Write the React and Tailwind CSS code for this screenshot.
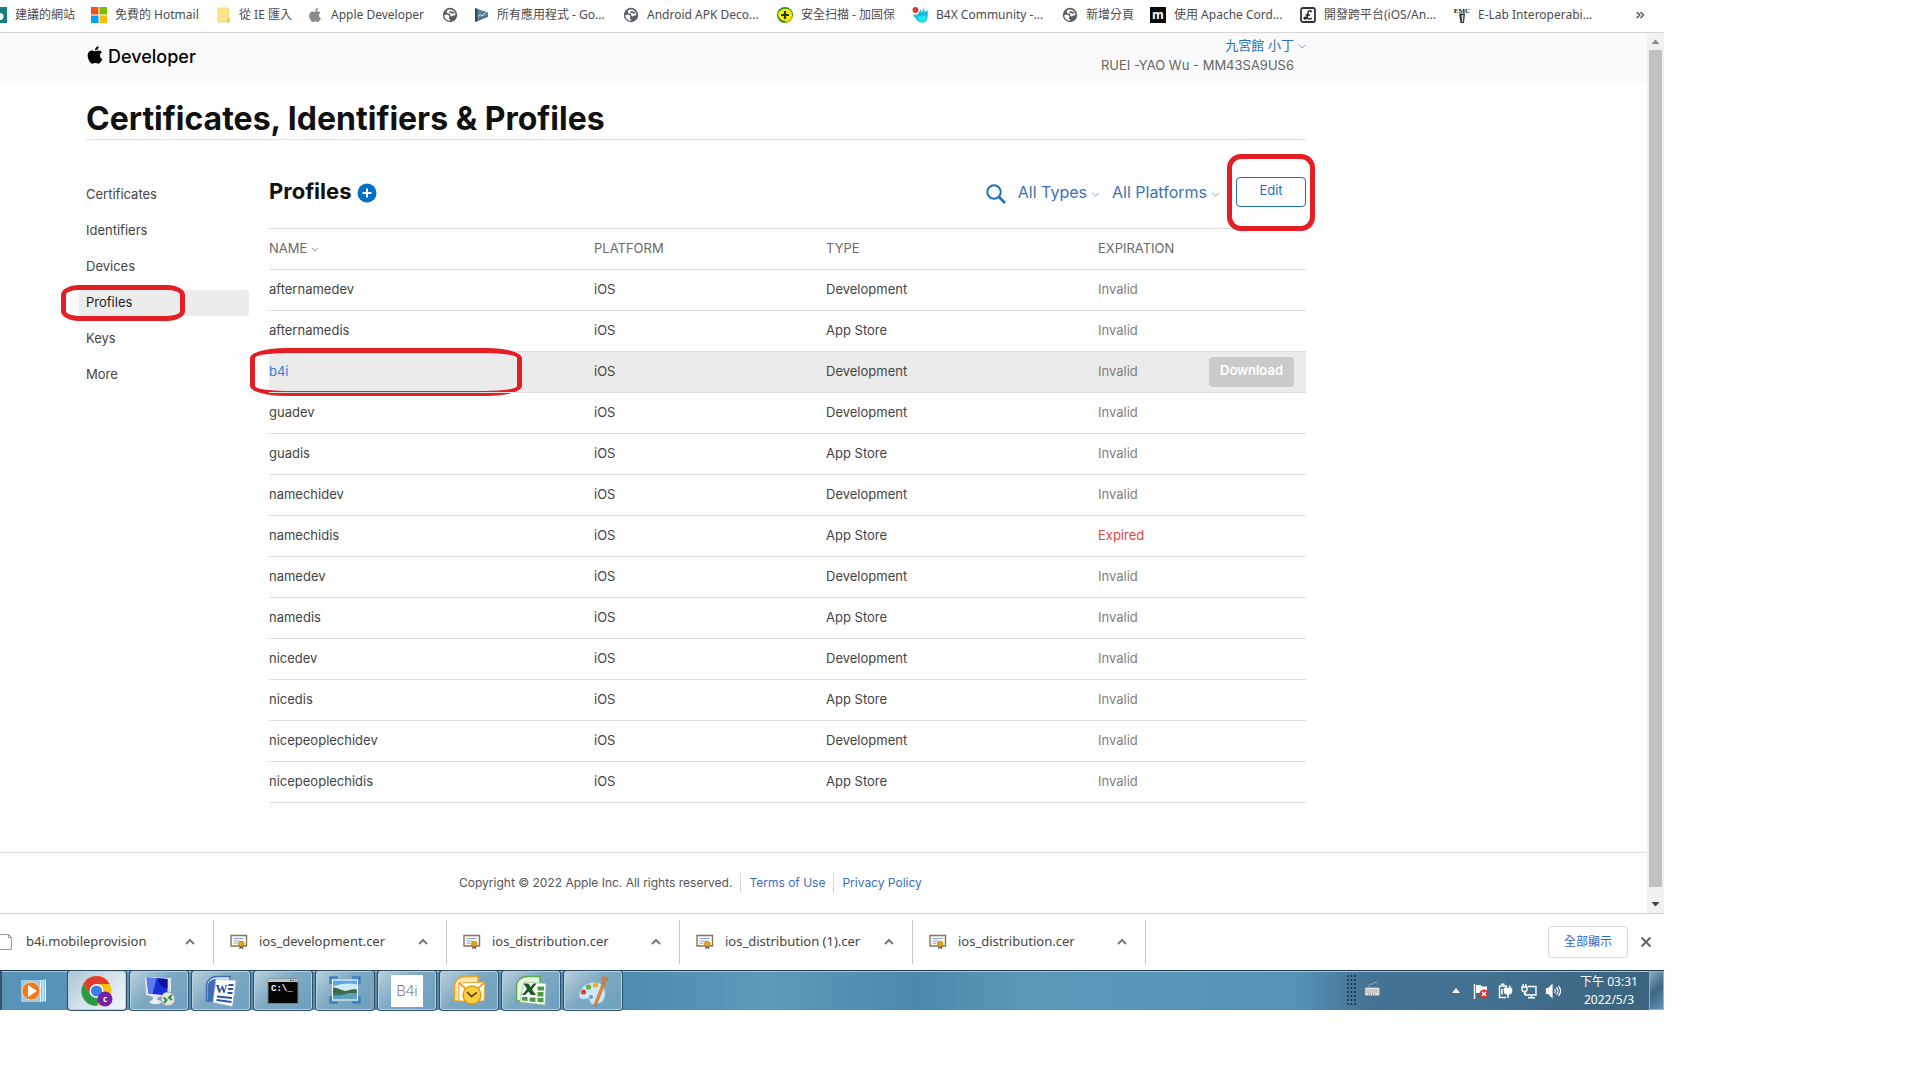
import React from "react";
import { FaApple } from "react-icons/fa";

const BOOKMARK_FONT = "font-['Noto_Sans','Noto_Sans_CJK_TC',sans-serif]";

function Chevron({ className = "", up = false }) {
  return (
    <svg viewBox="0 0 10 6" className={className} fill="none" stroke="currentColor" aria-hidden="true">
      <path d={up ? "M1 5 5 1l4 4" : "M1 1l4 4 4-4"} />
    </svg>
  );
}

function Globe() {
  return (
    <svg viewBox="0 0 16 16" className="size-4" aria-hidden="true">
      <circle cx="8" cy="8" r="7.2" fill="#5a5e63" />
      <path d="M2.300 8.300C4 7.400 6.500 7.800 7.300 9c.6 1.200-.8 1.600-.4 2.600.3.800 1.600.6 1.300 2.200C4.800 13.900 2.300 11.500 2.300 8.300Z" fill="#fff" />
      <path d="M4.800 3.800C7 1.900 11.500 1.700 13.600 7.200c-.8 2-2.600.8-3.200 1.700-.5 1-2.200.3-2.200-.8 0-1-.7-1.500-1.900-1.500-1.300-.1-1.900-1.800-1.500-2.800Z" fill="#fff" />
      <path d="M7.500 4.500c1.800-.6 2.600.4 4 .6l1 1.600c-1.600.4-2.400-.6-3.800-.4-.9 0-1.800-1-1.200-1.800Z" fill="#5a5e63" />
    </svg>
  );
}

function MicrosoftIcon() {
  return (
    <svg viewBox="0 0 16 16" className="size-4" aria-hidden="true">
      <path fill="#f1511b" d="M0 0h7.500v7.500H0z" />
      <path fill="#80bb03" d="M8.500 0H16v7.500H8.500z" />
      <path fill="#00a3f0" d="M0 8.500h7.500V16H0z" />
      <path fill="#fbb909" d="M8.500 8.500H16V16H8.500z" />
    </svg>
  );
}

function FolderIcon() {
  return (
    <svg viewBox="0 0 16 16" className="size-4" aria-hidden="true">
      <path d="M3 1h10.500v10l.5 4H3z" fill="#fde58b" stroke="#edcf68" strokeWidth=".8" />
      <path d="M12.500 11.500h1.800V15h-2z" fill="#f7d566" stroke="#dcb94a" strokeWidth=".6" />
    </svg>
  );
}

function PlayConsoleIcon() {
  return (
    <svg viewBox="0 0 16 16" className="size-4" aria-hidden="true">
      <path d="M2 1l13 4.500v4L2 15z" fill="#5d8499" />
      <path d="M2 1l2.500 1v12L2 15z" fill="#2f4f60" />
      <path d="M2 15l13-5.500V8L4 13z" fill="#3c6174" />
      <path d="M5 9.500l2.500-2L9 9l3.500-3" stroke="#d5eaf4" fill="none" />
    </svg>
  );
}

function ShieldScanIcon() {
  return (
    <svg viewBox="0 0 16 16" className="size-4" aria-hidden="true">
      <circle cx="8" cy="8" r="8" fill="#2f8f2b" />
      <path d="M1 6.500C3 2 9 .5 13 3c3 3 2.500 8-1 10.500C7 15 1.500 13 1 6.500z" fill="#ffe90f" />
      <path d="M8 16c4 0 8-3.500 8-8-1 3-4 6-8 6.500z" fill="#f3b51c" />
      <path d="M8 4v8M4 8h8" stroke="#17421b" strokeWidth="2.200" />
    </svg>
  );
}

function B4XIcon() {
  return (
    <svg viewBox="0 0 16 16" className="size-4" aria-hidden="true">
      <circle cx="3.500" cy="3" r="3" fill="#dd3b3b" />
      <path d="M1 7c1.500 1 3 1 4.500.5L9 2l.5 4L12 .5l.5 4.500L15.500 3c.5 5 .5 9-2 12-4 1.500-8.500 0-9.500-3.500C2 10 1.500 9 1 7z" fill="#19bcd6" />
      <path d="M5 10c3-1.500 6-1.500 9.500-1.500-.5 3-.5 4.500-1.500 6-3.500 1-7-.5-8-4.500z" fill="#1ee5f5" />
    </svg>
  );
}

function MediumIcon() {
  return (
    <svg viewBox="0 0 16 16" className="size-4" aria-hidden="true">
      <path d="M0 0h16v16H0z" fill="#0a0a0a" />
      <text x="8" y="11.500" textAnchor="middle" fontSize="12" fontWeight="700" fill="#fff" fontFamily="Open Sans, sans-serif">m</text>
    </svg>
  );
}

function PoundIcon() {
  return (
    <svg viewBox="0 0 16 16" className="size-4" aria-hidden="true">
      <rect x="1" y="1" width="14" height="14" rx="2" fill="#fff" stroke="#333" strokeWidth="1.800" />
      <path d="M11.500 5.200C11 3.200 8.300 3.400 8 5.500c-.3 2 .2 4-1.600 5.800-1.500 1.400-3 .2-2-.8 1.500-1 3.600 1.800 5.600 1.600 1 0 1.500-.6 1.800-1.300M5.500 8h4.500" fill="none" stroke="#222" strokeWidth="1.500" />
    </svg>
  );
}

function EmcIcon() {
  return (
    <svg viewBox="0 0 16 16" className="size-4" aria-hidden="true">
      <text x="8" y="6" textAnchor="middle" fontSize="7" fontWeight="700" fill="#111" fontFamily="Liberation Serif, serif">EMC</text>
      <path d="M5 6.500h6L10 16H6.500z" fill="#333" />
      <path d="M7.500 8h2l-.5 7H8z" fill="#ddd" />
    </svg>
  );
}

const bookmarks = [
  { label: "免費的 Hotmail", Icon: MicrosoftIcon, width: "w-[124px]" },
  { label: "從 IE 匯入", Icon: FolderIcon, width: "w-[92px]" },
  { label: "Apple Developer", Icon: () => <FaApple className="size-4 text-[#8a8a8a]" />, width: "w-[135px]" },
  { label: "", Icon: Globe, width: "w-[31px]" },
  { label: "所有應用程式 - Go...", Icon: PlayConsoleIcon, width: "w-[150px]" },
  { label: "Android APK Deco...", Icon: Globe, width: "w-[154px]" },
  { label: "安全扫描 - 加固保", Icon: ShieldScanIcon, width: "w-[135px]" },
  { label: "B4X Community -...", Icon: B4XIcon, width: "w-[150px]" },
  { label: "新增分頁", Icon: Globe, width: "w-[88px]" },
  { label: "使用 Apache Cord...", Icon: MediumIcon, width: "w-[150px]" },
  { label: "開發跨平台(iOS/An...", Icon: PoundIcon, width: "w-[154px]" },
  { label: "E-Lab Interoperabi...", Icon: EmcIcon, width: "w-[150px]" },
];

function BookmarksBar() {
  return (
    <nav aria-label="Bookmarks" className={`flex h-[33px] items-center border-b border-[#d6d6d6] pb-[3px] text-xs text-[#4b4b50] ${BOOKMARK_FONT}`}>
      <a href="#suggested" className="flex w-[91px] shrink-0 items-center gap-2 whitespace-nowrap">
        <svg viewBox="0 0 7 16" className="h-4 w-[7px]" aria-hidden="true">
          <path d="M0 0h7v16H0z" fill="#12807c" />
          <circle cx="0" cy="9.500" r="3.500" fill="#fff" />
        </svg>
        建議的網站
      </a>
      {bookmarks.map(({ label, Icon, width }, i) => (
        <a key={i} href={`#bookmark-${i}`} aria-label={label || "Bookmark"} className={`flex shrink-0 items-center gap-2 whitespace-nowrap ${width}`}>
          <Icon />
          {label}
        </a>
      ))}
      <button type="button" aria-label="More bookmarks" className="ml-auto mr-5">
        <svg viewBox="0 0 8 8" className="size-2" fill="none" stroke="#555" strokeWidth="1.500" aria-hidden="true">
          <path d="M.8 1l3 3-3 3M4.500 1l3 3-3 3" />
        </svg>
      </button>
    </nav>
  );
}

const sections = ["Certificates", "Identifiers", "Devices", "Profiles", "Keys", "More"];

function Sidebar() {
  return (
    <nav aria-label="Sections" className="w-[183px] shrink-0 pt-[42px]">
      <ul className="flex flex-col gap-[10px]">
        {sections.map((name) => {
          const active = name === "Profiles";
          return (
            <li key={name} className={`relative -ml-[7px] mr-5 flex h-[26px] items-center rounded px-[7px] text-[13px] ${active ? "bg-[#ececec] text-[#222]" : "text-[#444]"}`}>
              <a href={`#${name.toLowerCase()}`}>{name}</a>
              {active && <span aria-hidden="true" className="absolute -left-[18px] -top-[5px] h-9 w-[124px] border-[5px] border-[#e31e25] [border-radius:18px/10px]" />}
            </li>
          );
        })}
      </ul>
    </nav>
  );
}

const profiles = [
  ["afternamedev", "Development"],
  ["afternamedis", "App Store"],
  ["b4i", "Development"],
  ["guadev", "Development"],
  ["guadis", "App Store"],
  ["namechidev", "Development"],
  ["namechidis", "App Store", "Expired"],
  ["namedev", "Development"],
  ["namedis", "App Store"],
  ["nicedev", "Development"],
  ["nicedis", "App Store"],
  ["nicepeoplechidev", "Development"],
  ["nicepeoplechidis", "App Store"],
];

function ProfilesTable() {
  return (
    <table className="w-full table-fixed border-separate border-spacing-0 border-b border-[#dedede] text-left text-[13px] text-[#444]">
      <colgroup>
        <col className="w-[325px]" />
        <col className="w-[232px]" />
        <col className="w-[272px]" />
        <col />
      </colgroup>
      <thead>
        <tr className="h-[41px] text-[#6a6a6a] [&>th]:border-t [&>th]:border-[#dedede] [&>th]:font-normal">
          <th>
            <button type="button" className="flex items-center gap-1">
              NAME <Chevron className="h-[5px] w-2 text-[#777]" />
            </button>
          </th>
          <th>PLATFORM</th>
          <th>TYPE</th>
          <th>EXPIRATION</th>
        </tr>
      </thead>
      <tbody>
        {profiles.map(([name, type, status = "Invalid"]) => {
          const hot = name === "b4i";
          return (
            <tr key={name} className={`h-[41px] [&>td]:border-t [&>td]:border-[#dedede] ${hot ? "bg-[#ebebeb]" : ""}`}>
              <td className="relative">
                <a href={`#${name}`} className={hot ? "text-[#2f7ce0]" : ""}>{name}</a>
                {hot && <span aria-hidden="true" className="absolute -left-[19px] -top-[4px] h-12 w-[272px] border-[5px] border-[#e31e25] [border-radius:36px/10px]" />}
              </td>
              <td>iOS</td>
              <td>{type}</td>
              <td className={status === "Expired" ? "text-[#e0483c]" : "text-[#808080]"}>
                <div className="flex items-center justify-between pr-3">
                  {status}
                  {hot && (
                    <button type="button" className="h-[30px] w-[85px] rounded bg-[#cacaca] pb-0.5 text-[13px] font-semibold text-white">
                      Download
                    </button>
                  )}
                </div>
              </td>
            </tr>
          );
        })}
      </tbody>
    </table>
  );
}

function Filter({ label }) {
  return (
    <div className="flex items-center gap-1">
      <select aria-label={label} className="field-sizing-content appearance-none bg-transparent text-base text-[#3a74b4]">
        <option>{label}</option>
      </select>
      <Chevron className="mt-1 h-[5px] w-[9px] text-[#5b90c6]" />
    </div>
  );
}

function DeveloperPage() {
  return (
    <div className="min-w-0 grow font-['Inter','Noto_Sans_CJK_TC',sans-serif]">
      <header className="h-[50px] bg-[#fafafa] pl-[86px] pr-[341px]">
        <div className="flex items-start justify-between">
          <a href="#developer" className="mt-3 flex items-center gap-1 text-lg leading-6 font-medium text-black">
            <FaApple className="mb-1 h-5 w-[18px]" />
            Developer
          </a>
          <div className="flex flex-col items-end text-[13px] leading-5 text-[#666]">
            <button type="button" className="mt-[2px] flex items-center gap-1 text-[#2a70b8]">
              九宮館 小丁
              <Chevron className="mt-0.5 h-[5px] w-2 text-[#5b90c6]" />
            </button>
            <span className="pr-3">RUEI -YAO Wu - MM43SA9US6</span>
          </div>
        </div>
      </header>

      <main className="pl-[86px] pr-[341px]">
        <h1 className="border-b border-[#dedede] pt-4 text-[32px] leading-10 font-bold text-[#111]">
          Certificates, Identifiers &amp; Profiles
        </h1>
        <div className="flex">
          <Sidebar />
          <section className="min-w-0 grow">
            <div className="flex h-[88px] items-center justify-between pt-4">
              <div className="-mt-0.5 flex items-center gap-[6px]">
                <h2 className="text-[22px] leading-7 font-bold text-[#111]">Profiles</h2>
                <button type="button" aria-label="Add profile" className="mt-1">
                  <svg viewBox="0 0 20 20" className="size-5" aria-hidden="true">
                    <circle cx="10" cy="10" r="9.500" fill="#0070c9" />
                    <path d="M10 5.500v9M5.500 10h9" stroke="#fff" strokeWidth="2" />
                  </svg>
                </button>
              </div>
              <div className="flex items-center gap-3">
                <button type="button" aria-label="Search" className="mt-1">
                  <svg viewBox="0 0 20 20" className="size-5" fill="none" stroke="#1d71bb" aria-hidden="true">
                    <circle cx="8" cy="8" r="6.700" strokeWidth="2" />
                    <path d="M13 13l6 6" strokeWidth="2.600" />
                  </svg>
                </button>
                <Filter label="All Types" />
                <Filter label="All Platforms" />
                <div className="relative ml-1">
                  <button type="button" className="h-[30px] w-[70px] rounded border border-[#1d71bb] pb-0.5 text-[13px] text-[#1d71bb]">
                    Edit
                  </button>
                  <span aria-hidden="true" className="pointer-events-none absolute -left-[9px] -top-[23px] h-[77px] w-[88px] rounded-[14px] border-[5px] border-[#e31e25]" />
                </div>
              </div>
            </div>
            <ProfilesTable />
          </section>
        </div>
      </main>

      <footer className="mt-[49px] flex h-[61px] items-center border-t border-[#dedede] pl-[459px] text-xs text-[#555]">
        <span>Copyright © 2022 Apple Inc. All rights reserved.</span>
        <a href="#terms" className="ml-2 border-l border-[#d6d6d6] px-2 leading-5 text-[#3a6fc0]">Terms of Use</a>
        <a href="#privacy" className="border-l border-[#d6d6d6] pl-2 leading-5 text-[#3a6fc0]">Privacy Policy</a>
      </footer>
    </div>
  );
}

function Scrollbar() {
  return (
    <div aria-hidden="true" className="flex w-[17px] shrink-0 flex-col items-center bg-[#f1f1f1]">
      <svg viewBox="0 0 17 17" className="size-[17px]"><path d="M4.500 11h8l-4-4.500z" fill="#8a8a8a" /></svg>
      <div className="w-[13px] grow bg-[#c1c1c1]" />
      <svg viewBox="0 0 17 26" className="h-[26px] w-[17px]"><path d="M4.500 15h8l-4 4.500z" fill="#444" /></svg>
    </div>
  );
}

function CertificateIcon() {
  return (
    <svg viewBox="0 0 18 16" className="h-4 w-[18px]" aria-hidden="true">
      <path d="M1 1.500h15.500v10.500H1z" fill="#fffdf6" stroke="#84745a" strokeWidth="1.400" />
      <path d="M3.500 4.500h10M3.500 7h6M3.500 9.200h4" stroke="#8b9fd0" />
      <path d="M9.700 11l-.4 4.500 2-1.500 2 1.500-.4-4.500z" fill="#3c5f9c" />
      <circle cx="11.300" cy="10" r="2.800" fill="#e6a417" stroke="#9c6b08" strokeWidth=".6" />
    </svg>
  );
}

const downloads = ["ios_development.cer", "ios_distribution.cer", "ios_distribution (1).cer", "ios_distribution.cer"];

function DownloadsBar() {
  return (
    <div className="flex h-[57px] items-center border-t border-[#d0d0d0] font-['Noto_Sans','Noto_Sans_CJK_TC',sans-serif] text-[13px] text-[#454545]">
      <div className="flex h-11 w-[214px] items-center border-r border-[#c8c8c8] pr-[18px]">
        <svg viewBox="0 0 12 16" className="mr-[14px] h-4 w-3" aria-hidden="true">
          <path d="M-2 .5H8.500l3 3v12H-2z" fill="#fdfdfd" stroke="#9a9a9a" />
          <path d="M8.500.5v3h3" fill="none" stroke="#9a9a9a" />
        </svg>
        <a href="#file">b4i.mobileprovision</a>
        <button type="button" aria-label="Options for b4i.mobileprovision" className="ml-auto">
          <Chevron up className="h-[6px] w-[10px] stroke-2 text-[#777]" />
        </button>
      </div>
      {downloads.map((file, i) => (
        <div key={i} className="flex h-11 w-[233px] items-center border-r border-[#c8c8c8] pr-[18px] pl-4">
          <CertificateIcon />
          <a href={`#download-${i}`} className="ml-[11px]">{file}</a>
          <button type="button" aria-label={`Options for ${file}`} className="ml-auto">
            <Chevron up className="h-[6px] w-[10px] stroke-2 text-[#777]" />
          </button>
        </div>
      ))}
      <button type="button" className="ml-auto h-8 w-20 rounded border border-[#d6d8db] text-xs text-[#2f66d0]">
        全部顯示
      </button>
      <button type="button" aria-label="Close downloads bar" className="mr-[12px] ml-3">
        <svg viewBox="0 0 12 12" className="size-3" stroke="#666" strokeWidth="2" aria-hidden="true">
          <path d="M1.500 1.500l9 9M10.500 1.500l-9 9" />
        </svg>
      </button>
    </div>
  );
}

function MediaPlayerIcon() {
  return (
    <svg viewBox="0 0 32 32" className="size-8" aria-hidden="true">
      <path d="M22 5l6-.5v22L22 27z" fill="#8cc8ea" />
      <path d="M22.500 5v22M25 5v21.500M27.500 4.500v22" stroke="#e3f4fd" />
      <path d="M3 5h19v22H3z" fill="#9ccbe6" />
      <circle cx="13" cy="16" r="9" fill="#f27a1c" stroke="#fbd3a5" />
      <path d="M10 10v12l9-6z" fill="#fff" />
    </svg>
  );
}

function ChromeIcon() {
  return (
    <svg viewBox="0 0 32 32" className="size-8" aria-hidden="true">
      <circle cx="15.500" cy="16" r="15" fill="#fbc116" />
      <path d="M15.500 1A15 15 0 0 0 2.500 8.500L9 19.500 15.500 9h13A15 15 0 0 0 15.500 1z" fill="#e33b2e" />
      <path d="M2.500 8.500A15 15 0 0 0 15.500 31l6.500-11.500L9 19.500z" fill="#269c4a" />
      <circle cx="15.500" cy="16" r="7" fill="#fff" />
      <circle cx="15.500" cy="16" r="5.600" fill="#3a7fe8" />
      <circle cx="24" cy="24" r="7.500" fill="#7421a3" />
      <text x="24" y="26.500" textAnchor="middle" fontSize="8" fontWeight="700" fill="#fff" fontFamily="Open Sans, sans-serif">c</text>
    </svg>
  );
}

function RemoteDesktopIcon() {
  return (
    <svg viewBox="0 0 32 32" className="size-8" aria-hidden="true">
      <path d="M2 2l26 1v18L15 22l-1 4H9l1-4-7-2z" fill="#dfe4ea" />
      <path d="M6 27c3-3 10-3 13 0-3 3-10 3-13 0z" fill="#e9ecef" />
      <path d="M3.500 2.500l21 1.500v16.500l-19-2z" fill="#1730d8" />
      <path d="M3.500 2.500l10 .8-4 15.700-4-.5z" fill="#6d8cf7" opacity=".8" />
      <path d="M14.500 3.300l10 .7v9c-4 1-8-3-10-9.700z" fill="#0b149c" />
      <circle cx="25" cy="24" r="7" fill="#e4e6e3" stroke="#999" />
      <path d="M20.500 22.500l3 2.500-2.500 3M29 20l-3 2.500 3 2.500" stroke="#2c9135" strokeWidth="2" fill="none" />
    </svg>
  );
}

function OfficePlate({ dark, light }) {
  return (
    <path d="M1.500 26V10C2.500 4.500 7 1.500 13 1.500h12V26z" fill={light} stroke={dark} strokeWidth="1.500" />
  );
}

function WordIcon() {
  return (
    <svg viewBox="0 0 32 32" className="size-8" aria-hidden="true">
      <OfficePlate dark="#3f6bb5" light="#dfe9f7" />
      <path d="M2.500 26V11C3.500 6 7 4 11 4L8 26z" fill="#3f6bb5" />
      <path d="M11 4l20 1.500-3.500 26L8 27.500z" fill="#fff" stroke="#9fb4d8" strokeWidth=".7" />
      <text x="10.500" y="18" fontSize="12" fontWeight="700" fill="#24478f" fontFamily="Liberation Serif, serif">W</text>
      <path d="M23.500 10h5M23 14h5M22.500 18h5M12 21.500l15 1.500M11.500 25l15 2" stroke="#2b55a5" strokeWidth="2" />
    </svg>
  );
}

function TerminalIcon() {
  return (
    <svg viewBox="0 0 32 32" className="size-8" aria-hidden="true">
      <path d="M1 4h30v24.500H1z" fill="#050505" stroke="#7d7d7d" />
      <path d="M1 4h30v3H1z" fill="#bfc4c8" />
      <path d="M23 5.500h2M26 5.500h1M28.500 5.500h1" stroke="#444" />
      <text x="4" y="16" fontSize="9" fontWeight="700" fill="#fff" fontFamily="Liberation Mono, monospace">C:\_</text>
    </svg>
  );
}

function PictureIcon() {
  return (
    <svg viewBox="0 0 32 32" className="size-8" aria-hidden="true">
      <path d="M1.500 9V2.500H9M23 2.500h7.500V9M1.500 21v6.500H9M23 27.500h7.500V21" fill="none" stroke="#3b7fc4" strokeWidth="2.400" />
      <path d="M3 4.500h26v21H3z" fill="#fff" />
      <path d="M4 5.500h24v9H4z" fill="#58a9e6" />
      <path d="M4 11.500c8-3 15-4 24-2v9H4z" fill="#cfe8f6" />
      <path d="M4 12.500c5 0 8 3 13 3.500 4-1.500 8-2 11-1.500V18H4z" fill="#3b6a4b" />
      <path d="M4 18h24v6.500H4z" fill="#5fa0bb" />
      <path d="M4 18h16l-8 2.500H4z" fill="#3f7378" />
    </svg>
  );
}

function B4iIcon() {
  return (
    <span className="flex h-8 w-8 items-center justify-center bg-white font-['Open_Sans',sans-serif] text-[15px] font-light text-[#666]">B4i</span>
  );
}

function OutlookIcon() {
  return (
    <svg viewBox="0 0 32 32" className="size-8" aria-hidden="true">
      <OfficePlate dark="#eea324" light="#fde7b4" />
      <path d="M6 8l26-1-1 19H6z" fill="#fffdf3" stroke="#e4a233" />
      <path d="M6 8l13 11L32 7" fill="none" stroke="#eda12c" strokeWidth="2" />
      <circle cx="19" cy="20" r="9" fill="#f9cf3c" stroke="#d9980d" strokeWidth="1.300" />
      <path d="M14 17l4.500 4.500 5.500-4" fill="none" stroke="#6d5210" strokeWidth="1.800" />
    </svg>
  );
}

function ExcelIcon() {
  return (
    <svg viewBox="0 0 32 32" className="size-8" aria-hidden="true">
      <OfficePlate dark="#5fab4d" light="#e6f3e0" />
      <path d="M9 7l22 1.500-1 21.500L5 27z" fill="#fff" stroke="#8fc183" strokeWidth=".7" />
      <path d="M22.500 11.500h6.500v4h-6.500zM22.500 17h6v4.500h-6zM22.500 23h6v4.500l-6-.5zM14.500 22.500h6v4.500l-6-.5zM7 22h5.500v4L7 25.500z" fill="#4c9b42" />
      <path d="M8.500 8.500h5l2 3.500 3-3.500h3L17 14.500l4 5.500h-5l-2.500-3.500L10 20H7l5-6z" fill="#1c5a22" />
    </svg>
  );
}

function PaintIcon() {
  return (
    <svg viewBox="0 0 32 32" className="size-8" aria-hidden="true">
      <path d="M17 7C9 7 2 14 2 20c0 4 3 5 6 4 3-1 5 0 5 3 1 3 5 3 8 2 6-2 8-7 7-13-1-6-5-9-11-9z" fill="#cfe6f6" stroke="#84b5da" />
      <circle cx="6.500" cy="17" r="2.600" fill="#df4141" />
      <circle cx="11.500" cy="12" r="2.600" fill="#63b33e" />
      <circle cx="18.500" cy="10" r="2.600" fill="#efb02b" />
      <circle cx="14" cy="22" r="2" fill="#5fa3c9" />
      <path d="M25.500 8l2.500 1-9 22-2-1z" fill="#ef8636" stroke="#b85b18" strokeWidth=".6" />
      <path d="M25 1.500c2-1 6 0 7 3-2 1-3 3-4 4.500l-3-1.500z" fill="#b98353" />
    </svg>
  );
}

const apps = [
  ["Google Chrome", ChromeIcon],
  ["Remote Desktop", RemoteDesktopIcon],
  ["Word", WordIcon],
  ["Command Prompt", TerminalIcon],
  ["Pictures", PictureIcon],
  ["B4i", B4iIcon],
  ["Outlook", OutlookIcon],
  ["Excel", ExcelIcon],
  ["Paint", PaintIcon],
];

function TrayIcons() {
  return (
    <div className="flex items-center gap-2" aria-hidden="true">
      <svg viewBox="0 0 16 16" className="size-4">
        <path d="M1.500 1v15" stroke="#fff" strokeWidth="1.500" />
        <path d="M3 2h5l1 1.500h5V10H3z" fill="#fff" />
        <circle cx="11" cy="11" r="4.500" fill="#d8322a" />
        <path d="M9 9l4 4M13 9l-4 4" stroke="#fff" strokeWidth="1.400" />
      </svg>
      <svg viewBox="0 0 16 16" className="size-4" fill="none" stroke="#fff" strokeWidth="1.500">
        <path d="M9 14.500H2.500V3H9M4 1.200h3.500M5 6v5.500" />
        <path d="M7.500 5.500h7V8c0 2-1.500 3-3.500 3S7.500 10 7.500 8z" fill="#fff" />
        <path d="M9.300 5V2.500M12.700 5V2.500M11 11v4" />
      </svg>
      <svg viewBox="0 0 16 16" className="size-4" fill="none" stroke="#fff" strokeWidth="1.400">
        <path d="M7 3.500h8v8.500H4.500V9.500M7 14.700h7M10.500 12v3" />
        <path d="M1 4h5v2.500C6 8 5 8.500 3.500 8.500S1 8 1 6.500zM2.200 4V1M4.800 4V1M3.500 8.500V12" />
      </svg>
      <svg viewBox="0 0 16 16" className="size-4" fill="none" stroke="#fff" strokeWidth="1.200">
        <path d="M1.500 5.500h2L7 2v12L3.500 10.500h-2z" fill="#fff" />
        <path d="M9.500 6c1 1 1 3 0 4M11.500 4.500c2 2 2 5 0 7M13.500 3c2.500 3 2.500 7 0 10" />
      </svg>
    </div>
  );
}

function Taskbar() {
  return (
    <footer className="flex h-10 items-stretch border-t border-[#1f3a50] bg-[linear-gradient(90deg,#5a93b8_0%,#4f8bb0_38%,#5e98bb_46%,#4d88ac_55%,#5c97ba_62%,#5592b8_78%,#457395_82%,#42708f_90%,#3b627d_100%)] shadow-[inset_0_1px_0_#a9c9dc]">
      <button type="button" aria-label="Windows Media Player" className="flex w-[62px] items-center justify-center border-l-2 border-[#34566e] pl-1">
        <MediaPlayerIcon />
      </button>
      <div className="ml-[6px] flex gap-1">
        {apps.map(([name, Icon]) => (
          <button
            key={name}
            type="button"
            aria-label={name}
            className={`flex w-[58px] items-center justify-center rounded-[3px] border border-[#b9d0de] shadow-[0_0_0_1px_#2f5068] ${
              name === "Google Chrome" ? "bg-[linear-gradient(135deg,#a9c4d6,#d2e0ea_45%,#f1f6f9)]" : "bg-[linear-gradient(135deg,#b7cfdd,#7fa9c2_45%,#6d9fbe)]"
            } ${name === "Pictures" ? "border-r-[4px] border-r-[#7fa5bd] pl-[2px]" : ""}`}
          >
            <Icon />
          </button>
        ))}
      </div>
      <div className="ml-auto flex items-center text-white">
        <svg viewBox="0 0 9 31" className="h-[31px] w-[9px]" aria-hidden="true">
          <path d="M1 0v31M4.500 0v31M8 0v31" stroke="#18303f" strokeWidth="1.500" strokeDasharray="2 2" />
        </svg>
        <button type="button" aria-label="Keyboard" className="mb-1 ml-2">
          <svg viewBox="0 0 16 16" className="size-4" aria-hidden="true">
            <path d="M5 6c0-4 3-2 4-3.500s3-.5 4-2" fill="none" stroke="#9fb1bd" />
            <rect x="1" y="6.500" width="14.500" height="8" rx="1" fill="#e6e4e1" stroke="#8d8d8d" strokeWidth=".6" />
            <path d="M2.500 9h12M2.500 11h12M4 13h8" stroke="#777" strokeDasharray="1 1" />
          </svg>
        </button>
        <button type="button" aria-label="Show hidden icons" className="mr-[13px] ml-[72px]">
          <svg viewBox="0 0 8 5" className="h-[5px] w-2" aria-hidden="true"><path d="M0 5h8L4 0z" fill="#fff" /></svg>
        </button>
        <TrayIcons />
        <div className="mr-[11px] ml-[19px] w-[58px] text-center font-['Noto_Sans','Noto_Sans_CJK_TC',sans-serif] text-xs leading-[18px] whitespace-nowrap">
          <div>下午 03:31</div>
          <div>2022/5/3</div>
        </div>
        <button type="button" aria-label="Show desktop" className="h-full w-[15px] border border-[#8fb3c8] bg-[linear-gradient(135deg,#87a9bd,#3d6784_50%,#5f93b5)]" />
      </div>
    </footer>
  );
}

export default function App() {
  return (
    <div className="min-h-screen bg-white pr-64">
      <div className="overflow-x-clip">
        <BookmarksBar />
        <div className="flex">
          <DeveloperPage />
          <Scrollbar />
        </div>
        <DownloadsBar />
        <Taskbar />
      </div>
    </div>
  );
}
